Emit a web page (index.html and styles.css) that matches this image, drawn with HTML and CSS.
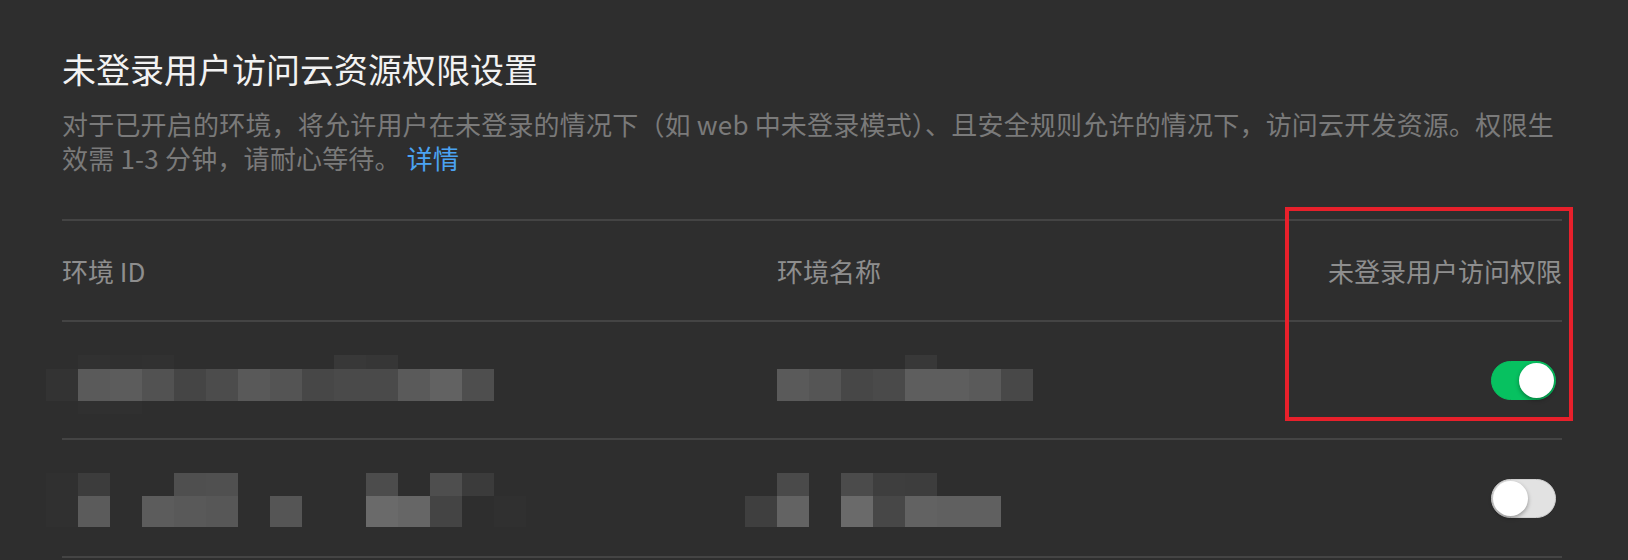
FILE: index.html
```html
<!DOCTYPE html>
<html lang="zh-CN">

<head>
    <meta charset="UTF-8">
    <meta name="viewport" content="width=device-width, initial-scale=1.0">
    <title>未登录用户访问云资源权限设置</title>
    <link rel="stylesheet" href="styles.css">
</head>

<body>
    <div class="page">
        <h1 class="title">未登录用户访问云资源权限设置</h1>
        <p class="desc">对于已开启的环境，将允许用户在未登录的情况下（如 web 中未登录模式）、且安全规则允许的情况下，访问云开发资源。权限生效需 1-3 分钟，请耐心等待。 <a class="link" href="#">详情</a></p>

        <div class="env_table">
            <div class="env_row env_head">
                <div class="cell">环境 ID</div>
                <div class="cell">环境名称</div>
                <div class="cell cell_right">未登录用户访问权限</div>
            </div>

            <div class="env_row">
                <div class="cell">
                    <div class="mosaic mosaic_a shift_id">
                        <div class="band band_top">
                            <span></span><span class="g31"></span><span class="g30"></span><span class="g31"></span><span></span><span></span><span></span><span></span><span></span><span class="g38"></span><span class="g36"></span>
                        </div>
                        <div class="band band_main">
                            <span class="g33"></span><span class="g5a"></span><span class="g5c"></span><span class="g52"></span><span class="g45"></span><span class="g4c"></span><span class="g59"></span><span class="g54"></span><span class="g47"></span><span class="g4a"></span><span class="g4a"></span><span class="g5a"></span><span class="g62"></span><span class="g4e"></span>
                        </div>
                        <div class="band band_bottom">
                            <span></span><span class="g30"></span><span class="g30"></span>
                        </div>
                    </div>
                </div>
                <div class="cell">
                    <div class="mosaic mosaic_a">
                        <div class="band band_top">
                            <span></span><span></span><span></span><span></span><span class="g38"></span>
                        </div>
                        <div class="band band_main">
                            <span class="g5a"></span><span class="g55"></span><span class="g47"></span><span class="g4a"></span><span class="g5e"></span><span class="g5e"></span><span class="g5a"></span><span class="g48"></span>
                        </div>
                        <div class="band band_bottom"></div>
                    </div>
                </div>
                <div class="cell cell_right">
                    <span class="switch switch_on"></span>
                </div>
            </div>

            <div class="env_row">
                <div class="cell">
                    <div class="mosaic mosaic_b shift_id">
                        <div class="band band_upper">
                            <span class="g30"></span><span class="g3c"></span><span></span><span></span><span class="g4f"></span><span class="g50"></span><span></span><span></span><span></span><span></span><span class="g4c"></span><span></span><span class="g4e"></span><span class="g3b"></span>
                        </div>
                        <div class="band band_lower">
                            <span class="g30"></span><span class="g5b"></span><span></span><span class="g5c"></span><span class="g59"></span><span class="g57"></span><span></span><span class="g55"></span><span></span><span></span><span class="g6a"></span><span class="g66"></span><span class="g44"></span><span></span><span class="g30"></span>
                        </div>
                    </div>
                </div>
                <div class="cell">
                    <div class="mosaic mosaic_b shift_name">
                        <div class="band band_upper">
                            <span></span><span class="g4a"></span><span></span><span class="g4b"></span><span class="g3e"></span><span class="g3d"></span>
                        </div>
                        <div class="band band_lower">
                            <span class="g3f"></span><span class="g63"></span><span></span><span class="g6a"></span><span class="g47"></span><span class="g62"></span><span class="g60"></span><span class="g60"></span>
                        </div>
                    </div>
                </div>
                <div class="cell cell_right">
                    <span class="switch"></span>
                </div>
            </div>
        </div>

        <div class="mark"></div>
    </div>
</body>

</html>
```

FILE: styles.css
```css
* {
    box-sizing: border-box;
}

body {
    margin: 0;
    background: #2e2e2e;
    font-family: "Noto Sans CJK SC", "Noto Sans", sans-serif;
}

.page {
    position: relative;
    width: 1628px;
    height: 560px;
    padding: 45px 66px 0 62px;
    overflow: hidden;
}

.title {
    margin: 0;
    font-size: 34px;
    line-height: 48px;
    font-weight: 400;
    color: #f2f2f2;
}

.desc {
    margin: 14px 0 0;
    font-size: 26px;
    line-height: 34px;
    letter-spacing: 0.2px;
    color: #7a7a7a;
}

.link {
    color: #4ba3f2;
    text-decoration: none;
}

.env_table {
    margin-top: 44px;
    border-top: 2px solid #444;
}

.env_row {
    display: grid;
    grid-template-columns: 715px 1fr auto;
    align-items: center;
    height: 118px;
    border-bottom: 2px solid #444;
}

.env_head {
    height: 101px;
    font-size: 26px;
    color: #8e8e8e;
}

.cell_right {
    display: flex;
    justify-content: flex-end;
}

/* pixelated (hidden) values */
.mosaic {
    display: flex;
    flex-direction: column;
}

.mosaic_a {
    margin-top: 9px;
}

.mosaic_b {
    margin-top: 3px;
}

.shift_id {
    margin-left: -16px;
}

.shift_name {
    margin-left: -32px;
}

.band {
    display: flex;
}

.band span {
    flex: none;
    width: 32px;
}

.band_top {
    height: 14px;
}

.band_main {
    height: 32px;
}

.band_bottom {
    height: 13px;
}

.band_upper {
    height: 23px;
}

.band_lower {
    height: 31px;
}

.g30 { background: #303030; }
.g31 { background: #313131; }
.g33 { background: #333; }
.g36 { background: #363636; }
.g38 { background: #383838; }
.g3b { background: #3b3b3b; }
.g3c { background: #3c3c3c; }
.g3d { background: #3d3d3d; }
.g3e { background: #3e3e3e; }
.g3f { background: #3f3f3f; }
.g44 { background: #444; }
.g45 { background: #454545; }
.g47 { background: #474747; }
.g48 { background: #484848; }
.g4a { background: #4a4a4a; }
.g4b { background: #4b4b4b; }
.g4c { background: #4c4c4c; }
.g4e { background: #4e4e4e; }
.g4f { background: #4f4f4f; }
.g50 { background: #505050; }
.g52 { background: #525252; }
.g54 { background: #545454; }
.g55 { background: #555; }
.g57 { background: #575757; }
.g59 { background: #595959; }
.g5a { background: #5a5a5a; }
.g5b { background: #5b5b5b; }
.g5c { background: #5c5c5c; }
.g5e { background: #5e5e5e; }
.g60 { background: #606060; }
.g62 { background: #626262; }
.g63 { background: #636363; }
.g66 { background: #666; }
.g6a { background: #6a6a6a; }

.switch {
    position: relative;
    display: block;
    width: 65px;
    height: 39px;
    margin-right: 6px;
    background: #e2e2e2;
    border: 1px solid #d0d0d0;
    border-radius: 20px;
}

.switch::after {
    content: "";
    position: absolute;
    top: 1px;
    left: 1px;
    width: 35px;
    height: 35px;
    background: #fff;
    border-radius: 50%;
    box-shadow: 0 2px 4px rgba(0, 0, 0, 0.35);
}

.switch_on {
    background: #07c160;
    border-color: #07c160;
}

.switch_on::after {
    left: auto;
    right: 1px;
}

.mark {
    position: absolute;
    left: 1285px;
    top: 207px;
    width: 288px;
    height: 214px;
    border: 4px solid #e8202b;
}
```
